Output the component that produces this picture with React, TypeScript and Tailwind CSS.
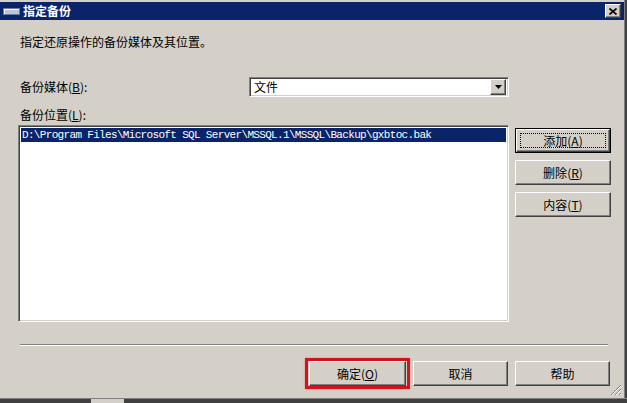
import React from "react";

const raised =
  "bg-[#d4d0c8] border border-t-white border-l-white border-b-[#404040] border-r-[#404040] shadow-[inset_-1px_-1px_0_#808080,inset_1px_1px_0_#d4d0c8]";
const sunken =
  "bg-white border border-t-[#808080] border-l-[#808080] border-b-white border-r-white shadow-[inset_1px_1px_0_#404040,inset_-1px_-1px_0_#d4d0c8]";

function Btn({ label, k, w, focused }: { label: string; k?: string; w: string; focused?: boolean }) {
  const content = (
    <span className="leading-[14px] text-black">
      {label}
      {k ? (
        <>
          (<span className="underline">{k}</span>)
        </>
      ) : null}
    </span>
  );
  if (focused) {
    return (
      <div className={`${w} h-[25px] border border-black`}>
        <div className={`${raised} w-full h-full flex items-center justify-center p-[3px]`}>
          <div className="w-full h-full border border-dotted border-black flex items-center justify-center">
            {content}
          </div>
        </div>
      </div>
    );
  }
  return <div className={`${raised} ${w} h-[25px] flex items-center justify-center`}>{content}</div>;
}

export default function App() {
  return (
    <div className="w-[627px] h-[403px] bg-[#d4d0c8] flex flex-col overflow-hidden font-['Noto_Sans_CJK_SC',sans-serif] text-[12px] text-black">
      <div className="flex-1 flex flex-row min-h-0">
        <div className="flex-1 flex flex-col pt-[2px] relative">
          {/* title bar */}
          <div className="h-[18px] bg-[#0a246a] flex items-center pl-[3px] pr-[3px]">
            <div className="w-[17px] h-[7px] bg-[#b8c4d8] border border-[#6878a0] shadow-[inset_1px_1px_0_#ffffff]" />
            <span className="ml-[3px] text-white font-bold leading-[14px]">指定备份</span>
            <div className={`${raised} ml-auto w-[16px] h-[14px] flex items-center justify-center`}>
              <svg width="8" height="7" viewBox="0 0 8 7">
                <path d="M0.5 0.5 L7.5 6.5 M7.5 0.5 L0.5 6.5" stroke="#000" strokeWidth="1.6" />
              </svg>
            </div>
          </div>

          {/* description */}
          <div className="mt-[15px] pl-[20px] leading-[14px]">指定还原操作的备份媒体及其位置。</div>

          {/* media row */}
          <div className="mt-[28px] pl-[20px] flex flex-row items-center">
            <div className="w-[229px] leading-[14px]">
              备份媒体(<span className="underline">B</span>):
            </div>
            <div className={`${sunken} w-[260px] h-[20px] flex flex-row items-center p-[2px]`}>
              <span className="flex-1 pl-[2px] leading-[14px]">文件</span>
              <div className={`${raised} w-[16px] h-[16px] flex items-center justify-center`}>
                <svg width="7" height="4" viewBox="0 0 7 4">
                  <path d="M0 0 H7 L3.5 4 Z" fill="#000" />
                </svg>
              </div>
            </div>
          </div>

          {/* location label */}
          <div className="mt-[11px] pl-[20px] leading-[14px]">
            备份位置(<span className="underline">L</span>):
          </div>

          {/* list + buttons */}
          <div className="mt-[3px] pl-[18px] flex flex-row gap-[6px]">
            <div className={`${sunken} w-[491px] h-[197px] p-[2px]`}>
              <div className="bg-[#0a246a] text-white h-[14px] leading-[14px] pl-[1px] font-['Liberation_Mono',monospace] text-[11px] tracking-[-0.67px] whitespace-nowrap overflow-hidden">
                D:\Program Files\Microsoft SQL Server\MSSQL.1\MSSQL\Backup\gxbtoc.bak
              </div>
            </div>
            <div className="pt-[3px] flex flex-col gap-[7px]">
              <Btn label="添加" k="A" w="w-[96px]" focused />
              <Btn label="删除" k="R" w="w-[96px]" />
              <Btn label="内容" k="T" w="w-[96px]" />
            </div>
          </div>

          {/* separator */}
          <div className="mt-[22px] ml-[20px] w-[588px] h-[2px] border-t border-t-[#808080] border-b border-b-white" />

          {/* bottom buttons */}
          <div className="mt-[15px] flex flex-row justify-end pr-[14px] gap-[7px]">
            <div className="relative">
              <Btn label="确定" k="O" w="w-[97px]" />
              <div className="absolute -left-[4px] -top-[3px] -right-[4px] -bottom-[3px] border-[3px] border-[#d2141c] shadow-[0_0_2px_#ff8080]" />
            </div>
            <Btn label="取消" w="w-[95px]" />
            <Btn label="帮助" w="w-[95px]" />
          </div>

          {/* size grip */}
          <svg className="absolute right-[2px] bottom-[2px]" width="12" height="12" viewBox="0 0 12 12">
            <path d="M11 1 L1 11 M11 5 L5 11 M11 9 L9 11" stroke="#808080" strokeWidth="1" />
            <path d="M11 2 L2 11 M11 6 L6 11 M11 10 L10 11" stroke="#ffffff" strokeWidth="1" />
          </svg>
        </div>
        {/* right frame */}
        <div className="w-[3px] border-l border-l-[#808080] bg-[#404040]" />
      </div>
      {/* bottom frame */}
      <div className="h-[5px] border-t border-t-[#808080] bg-[#404040] flex flex-row">
        <div className="ml-[90px] w-[35px] h-full bg-[#d4d0c8] border-l border-r border-[#404040]" />
      </div>
    </div>
  );
}
